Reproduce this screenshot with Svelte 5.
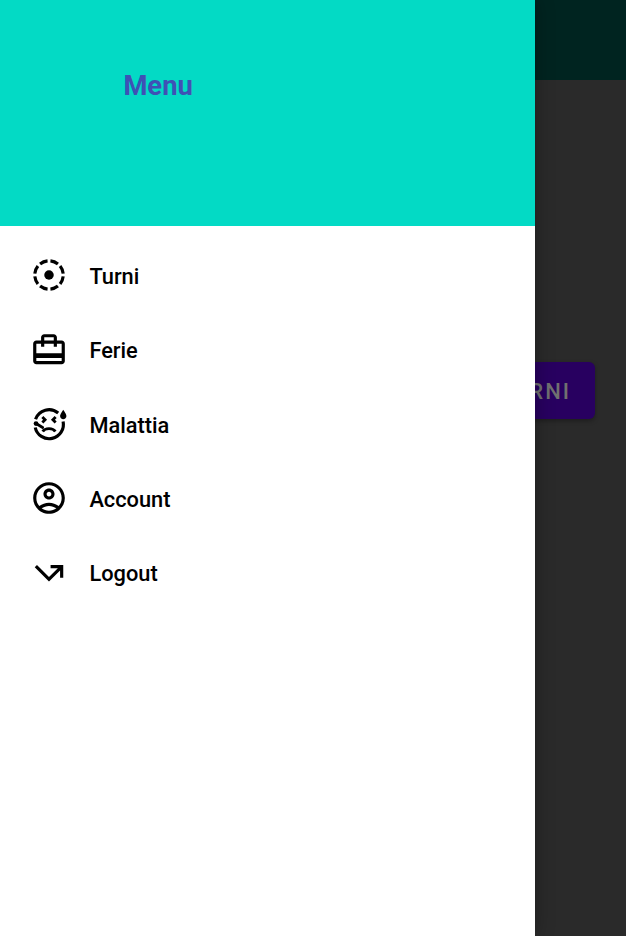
<script>
  const items = ['Turni', 'Ferie', 'Malattia', 'Account', 'Logout'];
</script>

<div class="screen">
  <main class="page">
    <div class="toolbar"></div>
    <div class="content"><button>TURNI</button></div>
  </main>
  <aside class="drawer">
    <header><h1>Menu</h1></header>
    <nav>
      {#each items as item}
        <a href="#{item}">
          <svg viewBox="0 0 24 24" aria-hidden="true">
            {#if item === 'Turni'}
              <circle cx="12" cy="12" r="3" />
              <circle class="line" cx="12" cy="12" r="9" pathLength="80" stroke-dasharray="7.3 2.7" stroke-dashoffset="-1.35" />
            {:else if item === 'Ferie'}
              <path d="M20 6h-3V4c0-1.11-.89-2-2-2H9c-1.11 0-2 .89-2 2v2H4c-1.11 0-2 .89-2 2v11c0 1.11.89 2 2 2h16c1.11 0 2-.89 2-2V8c0-1.11-.89-2-2-2zM9 4h6v2H9V4zm11 15H4v-2h16v2zm0-5H4V8h3v2h2V8h6v2h2V8h3v6z" />
            {:else if item === 'Malattia'}
              <path d="M21 9c-1.1 0-2-.9-2-2s2-4 2-4 2 2.9 2 4-.9 2-2 2z" />
              <path class="line" d="M3.5 9A9 9 0 0 1 17.8 5.1M20.9 10.4A9 9 0 0 1 3.3 14.2" />
              <circle cx="3.8" cy="11.7" r="1.5" />
              <path class="line thin" d="M3.8 11.7L8 14.2" stroke-linecap="round" />
              <path class="line thin" d="M8 16.7C9.5 14.3 14.5 14.3 16 16.7" />
              <path class="line thin" d="M7.8 7.6L9.5 9.3 7.8 11M16.2 7.6L14.5 9.3 16.2 11" />
            {:else if item === 'Account'}
              <path d="M12 2C6.48 2 2 6.48 2 12s4.48 10 10 10 10-4.48 10-10S17.52 2 12 2zM7.35 18.5C8.66 17.56 10.26 17 12 17s3.34.56 4.65 1.5C15.34 19.44 13.74 20 12 20s-3.34-.56-4.65-1.5zm10.79-1.38C16.45 15.8 14.32 15 12 15s-4.45.8-6.14 2.12C4.7 15.73 4 13.95 4 12c0-4.42 3.58-8 8-8s8 3.58 8 8c0 1.95-.7 3.73-1.86 5.12z" />
              <path d="M12 6c-1.93 0-3.5 1.57-3.5 3.5S10.07 13 12 13s3.5-1.57 3.5-3.5S13.93 6 12 6zm0 5c-.83 0-1.5-.67-1.5-1.5S11.17 8 12 8s1.5.67 1.5 1.5S12.83 11 12 11z" />
            {:else}
              <path d="M3 8.41l9 9 7-7V15h2V7h-8v2h4.59L12 14.59 4.41 7 3 8.41z" />
            {/if}
          </svg>
          <span>{item}</span>
        </a>
      {/each}
    </nav>
  </aside>
</div>

<style>
  :global(body) { margin: 0; }
  .screen {
    position: relative;
    width: 626px;
    height: 936px;
    overflow: hidden;
    font-family: Roboto, sans-serif;
  }
  .page {
    height: 100%;
    display: flex;
    flex-direction: column;
    background: #2a2a2a;
  }
  .toolbar { height: 80px; background: #002420; }
  .content {
    display: flex;
    justify-content: flex-end;
    padding: 282px 31px 0 0;
  }
  button {
    height: 57px;
    box-sizing: border-box;
    border: 0;
    border-radius: 6px;
    padding: 2px 24px 0 25px;
    background: #280060;
    color: #707070;
    font: 500 22px Roboto, sans-serif;
    letter-spacing: 2px;
    box-shadow: 0 2px 5px rgba(0, 0, 0, .3);
  }
  .drawer {
    position: absolute;
    inset: 0 auto 0 0;
    width: 535px;
    background: #fff;
    box-shadow: 0 0 18px rgba(0, 0, 0, .3);
  }
  header {
    height: 226px;
    box-sizing: border-box;
    padding: 70px 0 0 123.4px;
    background: #03dac5;
  }
  h1 {
    margin: 0;
    color: #3f51b5;
    font-size: 27.4px;
    line-height: 32px;
    font-weight: 700;
  }
  nav { padding-top: 12px; }
  a {
    display: flex;
    align-items: center;
    gap: 21.4px;
    height: 74.4px;
    padding-left: 30px;
    color: #000;
    text-decoration: none;
    font-size: 21.8px;
    font-weight: 500;
  }
  svg { width: 38px; height: 38px; flex: none; }
  span { padding-top: 2.4px; }
  .line { fill: none; stroke: #000; stroke-width: 2; }
  .thin { stroke-width: 1.8; }
</style>
